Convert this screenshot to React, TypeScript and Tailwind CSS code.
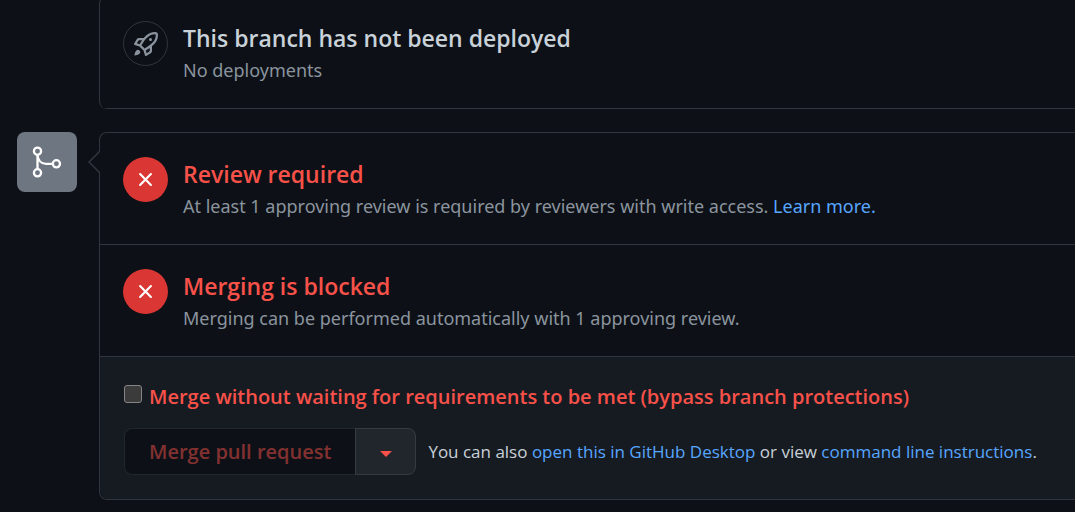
import type { ReactNode } from "react";

function Rocket() {
  return (
    <svg viewBox="0 0 16 16" className="size-6 fill-current" aria-hidden="true">
      <path d="M14.064 0h.186C15.216 0 16 .784 16 1.75v.186a8.752 8.752 0 0 1-2.564 6.186l-.458.459c-.314.314-.641.616-.979.904v3.207c0 .608-.315 1.172-.833 1.49l-2.774 1.707a.749.749 0 0 1-1.11-.418l-.954-3.102a1.214 1.214 0 0 1-.145-.125L3.754 9.816a1.218 1.218 0 0 1-.124-.145L.528 8.717a.749.749 0 0 1-.418-1.11l1.71-2.774A1.748 1.748 0 0 1 3.31 4h3.204c.288-.338.59-.665.904-.979l.459-.458A8.749 8.749 0 0 1 14.064 0ZM8.938 3.623h-.002l-.458.458c-.76.76-1.437 1.598-2.02 2.5l-1.5 2.317 2.143 2.143 2.317-1.5c.902-.583 1.74-1.26 2.499-2.02l.459-.458a7.25 7.25 0 0 0 2.123-5.127V1.75a.25.25 0 0 0-.25-.25h-.186a7.249 7.249 0 0 0-5.125 2.123ZM3.56 14.56c-.732.732-2.334 1.045-3.005 1.148a.234.234 0 0 1-.201-.064.234.234 0 0 1-.064-.201c.103-.671.416-2.273 1.15-3.003a1.502 1.502 0 1 1 2.12 2.12Zm6.94-3.935c-.088.06-.177.118-.266.175l-2.35 1.521.548 1.783 1.949-1.2a.25.25 0 0 0 .119-.213ZM3.678 8.116 5.2 5.766c.058-.09.117-.178.176-.266H3.309a.25.25 0 0 0-.213.119l-1.2 1.95ZM12 5a1 1 0 1 1-2 0 1 1 0 0 1 2 0Z" />
    </svg>
  );
}

function Cross() {
  return (
    <svg viewBox="0 0 16 16" className="size-[23px] fill-current" aria-hidden="true">
      <path d="M3.72 3.72a.75.75 0 0 1 1.06 0L8 6.94l3.22-3.22a.749.749 0 0 1 1.275.326.749.749 0 0 1-.215.734L9.06 8l3.22 3.22a.749.749 0 0 1-.326 1.275.749.749 0 0 1-.734-.215L8 9.06l-3.22 3.22a.751.751 0 0 1-1.042-.018.751.751 0 0 1-.018-1.042L6.94 8 3.72 4.78a.75.75 0 0 1 0-1.06Z" />
    </svg>
  );
}

function Merge() {
  return (
    <svg viewBox="0 0 36 36" className="size-9 fill-none stroke-current" strokeWidth="2.3" aria-hidden="true">
      <circle cx="8.5" cy="7.2" r="3.6" />
      <circle cx="8.5" cy="28.8" r="3.6" />
      <circle cx="27.4" cy="19.8" r="3.6" />
      <path d="M8.5 11v14M8.500 11c.5 5.500 4 8.800 8.500 8.800h6.500" />
    </svg>
  );
}

function Status({ icon, title, danger, children }: { icon: ReactNode; title: string; danger?: boolean; children: ReactNode }) {
  return (
    <section className="flex gap-[15px] border-b border-[#30363d] px-[23px] py-6">
      <div
        className={
          danger
            ? "flex size-[45px] shrink-0 items-center justify-center rounded-full bg-[#da3633] text-white"
            : "flex size-[45px] shrink-0 items-center justify-center rounded-full border border-[#30363d] text-[#8b949e]"
        }
      >
        {icon}
      </div>
      <div>
        <h3 className={danger ? "text-[23px] leading-[35px] font-semibold text-[#f85149]" : "text-[23px] leading-[35px] font-semibold text-[#c9d1d9]"}>{title}</h3>
        <p className="font-['Noto_Sans','Open_Sans',sans-serif] text-[18px] leading-7 text-[#8b949e]">{children}</p>
      </div>
    </section>
  );
}

export default function App() {
  return (
    <main className="min-h-screen overflow-hidden bg-[#0d1117] font-['Open_Sans','Noto_Sans',sans-serif] text-[#c9d1d9]">
      <div className="-mt-1 ml-[99px] rounded-l-lg border border-r-0 border-b-0 border-[#30363d]">
        <div className="overflow-hidden rounded-bl-lg">
          <Status icon={<Rocket />} title="This branch has not been deployed">No deployments</Status>
        </div>
      </div>

      <div className="mt-[23px] flex items-start gap-[22px] pl-[17px]">
        <div className="flex size-[60px] shrink-0 items-center justify-center rounded-lg bg-[#6e7681] text-white">
          <Merge />
        </div>
        <div className="relative min-w-0 flex-1 rounded-l-lg border border-r-0 border-[#30363d]">
          <svg viewBox="0 0 12 22" className="absolute top-[18px] -left-[12px] h-[22px] w-[12px]" aria-hidden="true">
            <path d="M12 0 1 11 12 22" className="fill-[#0d1117] stroke-[#30363d]" strokeWidth="1.5" />
          </svg>
          <Status danger icon={<Cross />} title="Review required">
            At least 1 approving review is required by reviewers with write access.{" "}
            <a href="#reviews" className="text-[#58a6ff]">Learn more.</a>
          </Status>
          <Status danger icon={<Cross />} title="Merging is blocked">
            Merging can be performed automatically with 1 approving review.
          </Status>
          <div className="rounded-bl-lg bg-[#161b22] px-6 py-6">
            <div className="flex items-start gap-[7px] text-[#f85149]">
              <input id="bypass" type="checkbox" className="mt-1 size-[18px] shrink-0 appearance-none rounded-[3px] border border-[#858585] bg-[#3b3b3b]" />
              <label htmlFor="bypass" className="text-[20px] leading-8 font-semibold">
                Merge without waiting for requirements to be met (bypass branch protections)
              </label>
            </div>
            <div className="mt-[15px] flex items-center gap-3">
              <div className="flex h-[47px] shrink-0 text-[#f85149]">
                <button disabled className="rounded-l-lg border border-r-0 border-[#21262d] bg-[#0d1117] px-6 text-[20px] font-semibold text-[#f85149]/50">
                  Merge pull request
                </button>
                <button aria-label="Select merge method" className="flex w-[61px] items-center justify-center rounded-r-lg border border-[#363b42] bg-[#21262d]">
                  <svg viewBox="0 0 12 6" className="mt-1 h-[6px] w-[12px] fill-current" aria-hidden="true">
                    <path d="M0 0h12L6 6z" />
                  </svg>
                </button>
              </div>
              <p className="text-[17px] leading-7 text-[#c9d1d9]">
                You can also <a href="#desktop" className="text-[#58a6ff]">open this in GitHub Desktop</a> or view{" "}
                <a href="#cli" className="text-[#58a6ff]">command line instructions</a>.
              </p>
            </div>
          </div>
        </div>
      </div>
    </main>
  );
}
